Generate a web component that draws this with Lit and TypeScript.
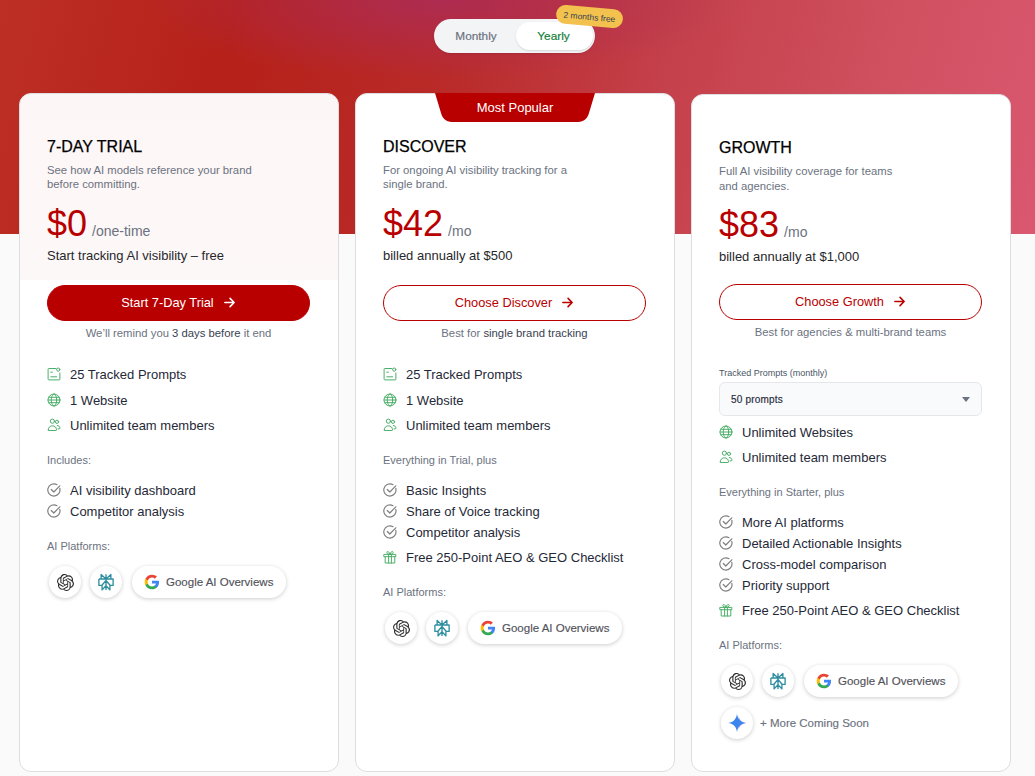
import { LitElement, css, html, svg, nothing } from "lit";
import { customElement, property } from "lit/decorators.js";

const icons: Record<string, unknown> = {
  prompts: svg`<path d="M9 1.500H1.800a.7.7 0 0 0-.7.7v10c0 .4.3.7.7.7h10.400c.4 0 .7-.3.7-.7V6"/><circle cx="11.200" cy="2.600" r="1.600"/><path d="M3.800 5.200h1.600M3.800 9.800h5.800"/>`,
  globe: svg`<circle cx="7" cy="7" r="6"/><ellipse cx="7" cy="7" rx="2.700" ry="6"/><path d="M1 7h12M1.800 4.300h10.400M1.800 9.700h10.400"/>`,
  users: svg`<circle cx="5.400" cy="3.200" r="2.100"/><circle cx="10" cy="3.800" r="1.600"/><path d="M1.300 11.900c0-2.500 1.800-4.100 4.100-4.100s4.100 1.600 4.100 4.100c0 .4-.3.6-.6.6H1.900c-.3 0-.6-.2-.6-.6zM10.300 7.500c1.500 0 2.600 1.200 2.600 2.800 0 .4-.2.6-.6.6h-1.300"/>`,
  gift: svg`<path d="M1.200 4.400h11.600v2.300H1.200zM2.200 6.700v6.300h9.600V6.700M5.600 4.400V13M8.400 4.400V13M7 4.400C5.600 4.400 3.800 3.800 3.800 2.500c0-1.500 2.400-1.500 3.200 1.900.8-3.400 3.200-3.400 3.200-1.900 0 1.300-1.800 1.900-3.200 1.900z"/>`,
  check: svg`<path d="M12.800 5.400A6.100 6.100 0 1 1 10 1.700"/><path d="M4.300 6.500 6.800 9l6-6.200"/>`,
};

const openai = "M22.2819 9.8211a5.9847 5.9847 0 0 0-.5157-4.9108 6.0462 6.0462 0 0 0-6.5098-2.9A6.0651 6.0651 0 0 0 4.9807 4.1818a5.9847 5.9847 0 0 0-3.9977 2.9 6.0462 6.0462 0 0 0 .7427 7.0966 5.98 5.98 0 0 0 .511 4.9107 6.051 6.051 0 0 0 6.5146 2.9001A5.9847 5.9847 0 0 0 13.2599 24a6.0557 6.0557 0 0 0 5.7718-4.2058 5.9894 5.9894 0 0 0 3.9977-2.9001 6.0557 6.0557 0 0 0-.7475-7.0729zm-9.022 12.6081a4.4755 4.4755 0 0 1-2.8764-1.0408l.1419-.0804 4.7783-2.7582a.7948.7948 0 0 0 .3927-.6813v-6.7369l2.02 1.1686a.071.071 0 0 1 .038.052v5.5826a4.504 4.504 0 0 1-4.4945 4.4944zm-9.6607-4.1254a4.4708 4.4708 0 0 1-.5346-3.0137l.142.0852 4.783 2.7582a.7712.7712 0 0 0 .7806 0l5.8428-3.3685v2.3324a.0804.0804 0 0 1-.0332.0615L9.74 19.9502a4.4992 4.4992 0 0 1-6.1408-1.6464zM2.3408 7.8956a4.485 4.485 0 0 1 2.3655-1.9728V11.6a.7664.7664 0 0 0 .3879.6765l5.8144 3.3543-2.0201 1.1685a.0757.0757 0 0 1-.071 0l-4.8303-2.7865A4.504 4.504 0 0 1 2.3408 7.872zm16.5963 3.8558L13.1038 8.364 15.1192 7.2a.0757.0757 0 0 1 .071 0l4.8303 2.7913a4.4944 4.4944 0 0 1-.6765 8.1042v-5.6772a.79.79 0 0 0-.407-.667zm2.0107-3.0231l-.142-.0852-4.7735-2.7818a.7759.7759 0 0 0-.7854 0L9.409 9.2297V6.8974a.0662.0662 0 0 1 .0284-.0615l4.8303-2.7866a4.4992 4.4992 0 0 1 6.6802 4.66zM8.3065 12.863l-2.02-1.1638a.0804.0804 0 0 1-.038-.0567V6.0742a4.4992 4.4992 0 0 1 7.3757-3.4537l-.142.0805L8.704 5.459a.7948.7948 0 0 0-.3927.6813zm1.0976-2.3654l2.602-1.4998 2.6069 1.4998v2.9994l-2.5974 1.4997-2.6067-1.4997Z";

const arrow = html`<svg class="arrow" viewBox="0 0 14 14" fill="none" stroke="currentColor" stroke-width="1.7" stroke-linecap="round" stroke-linejoin="round"><path d="M2 7h10M7.600 2.600 12 7l-4.400 4.400"/></svg>`;

const googleG = html`<svg class="g" viewBox="0 0 24 24"><path fill="#4285F4" d="M22.56 12.25c0-.78-.07-1.53-.2-2.25H12v4.26h5.92c-.26 1.37-1.04 2.53-2.21 3.31v2.77h3.57c2.08-1.92 3.28-4.74 3.28-8.09z"/><path fill="#34A853" d="M12 23c2.97 0 5.46-.98 7.28-2.66l-3.57-2.77c-.98.66-2.23 1.06-3.71 1.06-2.86 0-5.29-1.93-6.16-4.53H2.18v2.84C3.99 20.53 7.7 23 12 23z"/><path fill="#FBBC05" d="M5.84 14.09c-.22-.66-.35-1.36-.35-2.09s.13-1.43.35-2.09V7.07H2.18C1.43 8.55 1 10.22 1 12s.43 3.45 1.18 4.93l3.66-2.84z"/><path fill="#EA4335" d="M12 5.38c1.62 0 3.06.56 4.21 1.64l3.15-3.15C17.45 2.09 14.97 1 12 1 7.7 1 3.99 3.47 2.18 7.07l3.66 2.84c.87-2.6 3.3-4.53 6.16-4.53z"/></svg>`;

@customElement("platform-badges")
class PlatformBadges extends LitElement {
  @property({ type: Boolean }) more = false;

  render() {
    return html`
      <div class="row">
        <span class="circle"><svg class="logo" viewBox="0 0 24 24" fill="#2b2b2b"><path d=${openai}/></svg></span>
        <span class="circle">
          <svg class="logo px" viewBox="0 0 24 24" fill="none" stroke="#2f8fa0" stroke-width="1.800" stroke-linejoin="round">
            <path d="M12 1.500v21M12 8 5.500 2v6M12 8l6.500-6v6M2.500 8h19v8.500h-4.300M2.500 8v8.500h4.300M12 10l-5.200 6v6.500L12 17M12 10l5.200 6v6.500L12 17"/>
          </svg>
        </span>
        <span class="pill">${googleG}Google AI Overviews</span>
      </div>
      ${this.more
        ? html`<div class="row">
            <span class="circle">
              <svg class="spark" viewBox="0 0 24 24">
                <path fill="#c4a6ef" d="M14 3c.6 5 3.500 8.400 10 9-6.500.6-9.400 4-10 9z"/>
                <path fill="#3b86ee" d="M12 1c.8 6.400 4.300 10.200 10.500 11C16.300 12.800 12.800 16.600 12 23c-.8-6.400-4.300-10.200-10.500-11C7.700 11.200 11.200 7.400 12 1z"/>
              </svg>
            </span>
            <span class="soon">+ More Coming Soon</span>
          </div>`
        : nothing}
    `;
  }

  static styles = css`
    :host {
      display: flex;
      flex-direction: column;
      gap: 10px;
      margin: 13px 0 0 2px;
    }
    .row {
      display: flex;
      align-items: center;
      gap: 9px;
    }
    .circle {
      width: 32px;
      height: 32px;
      border-radius: 50%;
      background: #fff;
      box-shadow: 0 1px 4px rgba(0, 0, 0, 0.2);
      display: flex;
      align-items: center;
      justify-content: center;
    }
    .logo {
      width: 17px;
      height: 17px;
    }
    .px {
      width: 18px;
      height: 18px;
    }
    .spark {
      width: 20px;
      height: 20px;
    }
    .pill {
      height: 32px;
      box-sizing: border-box;
      padding: 0 13px 0 12px;
      margin-left: 1px;
      border-radius: 16px;
      background: #fff;
      box-shadow: 0 1px 4px rgba(0, 0, 0, 0.2);
      display: flex;
      align-items: center;
      gap: 6px;
      font-size: 11.500px;
      color: #52525b;
      -webkit-text-stroke: 0.15px #52525b;
    }
    .g {
      width: 16px;
      height: 16px;
    }
    .soon {
      font-size: 11.500px;
      color: #6b7280;
      -webkit-text-stroke: 0.15px #6b7280;
      margin-left: -2px;
    }
  `;
}

interface Plan {
  id: string;
  name: string;
  desc: string[];
  price: string;
  per: string;
  sub: string;
  cta: string;
  note: unknown;
  picker?: boolean;
  features: [string, string][];
  label: string;
  items: [string, string][];
  more?: boolean;
}

const plans: Plan[] = [
  {
    id: "trial",
    name: "7-DAY TRIAL",
    desc: ["See how AI models reference your brand", "before committing."],
    price: "$0",
    per: "/one-time",
    sub: "Start tracking AI visibility – free",
    cta: "Start 7-Day Trial",
    note: html`We’ll remind you <b>3 days before</b> it end`,
    features: [["prompts", "25 Tracked Prompts"], ["globe", "1 Website"], ["users", "Unlimited team members"]],
    label: "Includes:",
    items: [["check", "AI visibility dashboard"], ["check", "Competitor analysis"]],
  },
  {
    id: "discover",
    name: "DISCOVER",
    desc: ["For ongoing AI visibility tracking for a", "single brand."],
    price: "$42",
    per: "/mo",
    sub: "billed annually at $500",
    cta: "Choose Discover",
    note: html`Best for <b>single brand tracking</b>`,
    features: [["prompts", "25 Tracked Prompts"], ["globe", "1 Website"], ["users", "Unlimited team members"]],
    label: "Everything in Trial, plus",
    items: [
      ["check", "Basic Insights"],
      ["check", "Share of Voice tracking"],
      ["check", "Competitor analysis"],
      ["gift", "Free 250-Point AEO & GEO Checklist"],
    ],
  },
  {
    id: "growth",
    name: "GROWTH",
    desc: ["Full AI visibility coverage for teams", "and agencies."],
    price: "$83",
    per: "/mo",
    sub: "billed annually at $1,000",
    cta: "Choose Growth",
    note: html`Best for agencies & multi-brand teams`,
    picker: true,
    features: [["globe", "Unlimited Websites"], ["users", "Unlimited team members"]],
    label: "Everything in Starter, plus",
    items: [
      ["check", "More AI platforms"],
      ["check", "Detailed Actionable Insights"],
      ["check", "Cross-model comparison"],
      ["check", "Priority support"],
      ["gift", "Free 250-Point AEO & GEO Checklist"],
    ],
    more: true,
  },
];

@customElement("app-root")
class AppRoot extends LitElement {
  renderIcon(name: string) {
    return html`<svg class="ico ${name}" viewBox="0 0 14 14" fill="none" stroke="currentColor" stroke-width="1" stroke-linecap="round" stroke-linejoin="round">${icons[name]}</svg>`;
  }

  renderPlan(p: Plan) {
    return html`
      <section class="card ${p.id}">
        ${p.id === "discover"
          ? html`<div class="tab">
              <svg viewBox="0 0 160 29"><path fill="#b90000" d="M0 0h160l-6 20c-1.500 5.500-5 9-11 9H17C11 29 7.500 25.500 6 20z"/></svg>
              <span>Most Popular</span>
            </div>`
          : nothing}
        <h2>${p.name}</h2>
        <p class="desc">${p.desc.map((l) => html`${l}<br />`)}</p>
        <div class="price"><strong>${p.price}</strong><span>${p.per}</span></div>
        <p class="sub">${p.sub}</p>
        <a class="cta">${p.cta}${arrow}</a>
        <p class="note">${p.note}</p>
        ${p.picker
          ? html`<div class="picker-label">Tracked Prompts (monthly)</div>
              <div class="picker">50 prompts<i></i></div>`
          : nothing}
        <ul class="features">
          ${p.features.map(([i, t]) => html`<li>${this.renderIcon(i)}${t}</li>`)}
        </ul>
        <div class="label">${p.label}</div>
        <ul class="items">
          ${p.items.map(([i, t]) => html`<li class=${i}>${this.renderIcon(i)}${t}</li>`)}
        </ul>
        <div class="label platforms">AI Platforms:</div>
        <platform-badges ?more=${p.more}></platform-badges>
      </section>
    `;
  }

  render() {
    return html`
      <div class="toggle">
        <span class="opt">Monthly</span>
        <span class="opt on">Yearly</span>
        <span class="free">2 months free</span>
      </div>
      <div class="cards">${plans.map((p) => this.renderPlan(p))}</div>
    `;
  }

  static styles = css`
    :host {
      display: flex;
      flex-direction: column;
      box-sizing: border-box;
      height: 776px;
      overflow: hidden;
      padding: 19px 24px 4px 19px;
      font-family: "Liberation Sans", Arial, sans-serif;
      color: #111827;
      background:
        radial-gradient(ellipse 300px 80px at 440px 0, rgba(170, 45, 95, 0.75), rgba(170, 45, 95, 0)) 0 0 / 100% 234px no-repeat,
        linear-gradient(105deg, #bd2f24 0%, #b62119 22%, #b92a28 42%, #c4404a 62%, #d0505f 82%, #da5870 100%) 0 0 / 100% 234px no-repeat,
        #fafafa;
    }
    .toggle {
      position: relative;
      align-self: flex-start;
      margin-left: 415px;
      width: 161px;
      height: 34px;
      box-sizing: border-box;
      padding: 3px 2px;
      border-radius: 17px;
      background: #f3f4f6;
      display: flex;
      box-shadow: 0 1px 2px rgba(0, 0, 0, 0.1);
    }
    .opt {
      flex: 1;
      display: flex;
      align-items: center;
      justify-content: center;
      font-size: 11.800px;
      color: #6b7280;
      -webkit-text-stroke: 0.2px #6b7280;
      border-radius: 14px;
    }
    .opt.on {
      flex: none;
      width: 77px;
      padding-right: 2px;
      box-sizing: border-box;
      background: #fff;
      color: #15803d;
      -webkit-text-stroke: 0.2px #15803d;
      box-shadow: 0 1px 2px rgba(0, 0, 0, 0.12);
    }
    .free {
      position: absolute;
      top: -12px;
      left: 122px;
      width: 67px;
      height: 19px;
      border-radius: 10px;
      background: #f2c14e;
      color: #374151;
      font-size: 8.500px;
      display: flex;
      align-items: center;
      justify-content: center;
      transform: rotate(5deg);
    }
    .cards {
      flex: 1;
      margin-top: 40px;
      display: grid;
      grid-template-columns: repeat(3, 320px);
      gap: 16px;
    }
    .card {
      position: relative;
      box-sizing: border-box;
      padding: 44px 28px 0 27px;
      border: 1px solid #dcdee2;
      border-radius: 12px;
      background: #fff;
    }
    .card.trial {
      background: linear-gradient(#fdf6f6, #fdf8f8) 0 0 / 100% 186px no-repeat, #fff;
    }
    .card.growth {
      margin-top: 1px;
    }
    .tab {
      position: absolute;
      top: -1px;
      left: 79px;
      width: 160px;
      height: 29px;
      color: #fff;
      font-size: 13px;
      display: flex;
      align-items: center;
      justify-content: center;
    }
    .tab svg {
      position: absolute;
      inset: 0;
    }
    .tab span {
      position: relative;
    }
    h2 {
      margin: 0;
      font-size: 16px;
      line-height: 18px;
      font-weight: 500;
      color: #000;
      -webkit-text-stroke: 0.25px #000;
    }
    .desc {
      margin: 7px 0 0;
      font-size: 11.300px;
      line-height: 14px;
      color: #6b7280;
    }
    .growth .desc {
      line-height: 15px;
      margin-bottom: -2px;
    }
    .price {
      margin-top: 12px;
      display: flex;
      align-items: baseline;
      gap: 5px;
      color: #b90000;
    }
    .price strong {
      font-size: 36px;
      line-height: 41px;
      font-weight: 400;
    }
    .price span {
      font-size: 14px;
      color: #6b7280;
    }
    .sub {
      margin: 4px 0 0;
      font-size: 13px;
      line-height: 16px;
      color: #27272a;
    }
    .cta {
      margin-top: 21px;
      height: 36px;
      box-sizing: border-box;
      padding-bottom: 2px;
      border: 1px solid #b90000;
      border-radius: 18px;
      color: #b90000;
      font-size: 12.800px;
      display: flex;
      align-items: center;
      justify-content: center;
      gap: 9px;
    }
    .growth .cta {
      margin-top: 19px;
    }
    .trial .cta {
      background: #b90000;
      color: #fff;
    }
    .arrow {
      width: 13px;
      height: 13px;
    }
    .note {
      margin: 5px 0 0;
      text-align: center;
      font-size: 11.300px;
      line-height: 14px;
      color: #6b7280;
    }
    .note b {
      font-weight: 400;
      color: #374151;
    }
    .picker-label {
      margin-top: 29px;
      font-size: 9px;
      line-height: 11px;
      color: #4b5563;
    }
    .picker {
      margin-top: 3px;
      height: 34px;
      box-sizing: border-box;
      padding: 0 11px;
      border: 1px solid #e5e7eb;
      border-radius: 6px;
      background: #f8fafc;
      font-size: 10px;
      color: #1f2937;
      -webkit-text-stroke: 0.15px #1f2937;
      letter-spacing: 0.2px;
      display: flex;
      align-items: center;
      justify-content: space-between;
    }
    .picker i {
      border: 4.500px solid transparent;
      border-top: 5px solid #6b7280;
      border-bottom: 0;
    }
    ul {
      list-style: none;
      margin: 0;
      padding: 0;
      font-size: 13px;
      color: #1f2937;
    }
    li {
      display: flex;
      align-items: center;
      gap: 9px;
    }
    .ico {
      width: 14px;
      height: 14px;
      flex: none;
      margin-top: -2px;
    }
    .features {
      margin-top: 27px;
      display: flex;
      flex-direction: column;
      gap: 9.500px;
    }
    .growth .picker + .features {
      margin-top: 9px;
      gap: 9px;
    }
    .features li {
      line-height: 16px;
    }
    .features .ico {
      color: #4caf6a;
    }
    .label {
      margin-top: 19px;
      font-size: 11px;
      line-height: 14px;
      color: #6b7280;
    }
    .items {
      margin-top: 16px;
      display: flex;
      flex-direction: column;
      gap: 5px;
    }
    .items li {
      line-height: 16px;
    }
    .items li.gift {
      margin-top: 4px;
    }
    .items .ico {
      color: #808080;
      stroke-width: 1.200;
    }
    .items .ico.gift {
      color: #4caf6a;
      stroke-width: 1;
    }
    .label.platforms {
      margin-top: 19px;
    }
  `;
}

export { AppRoot, PlatformBadges };
